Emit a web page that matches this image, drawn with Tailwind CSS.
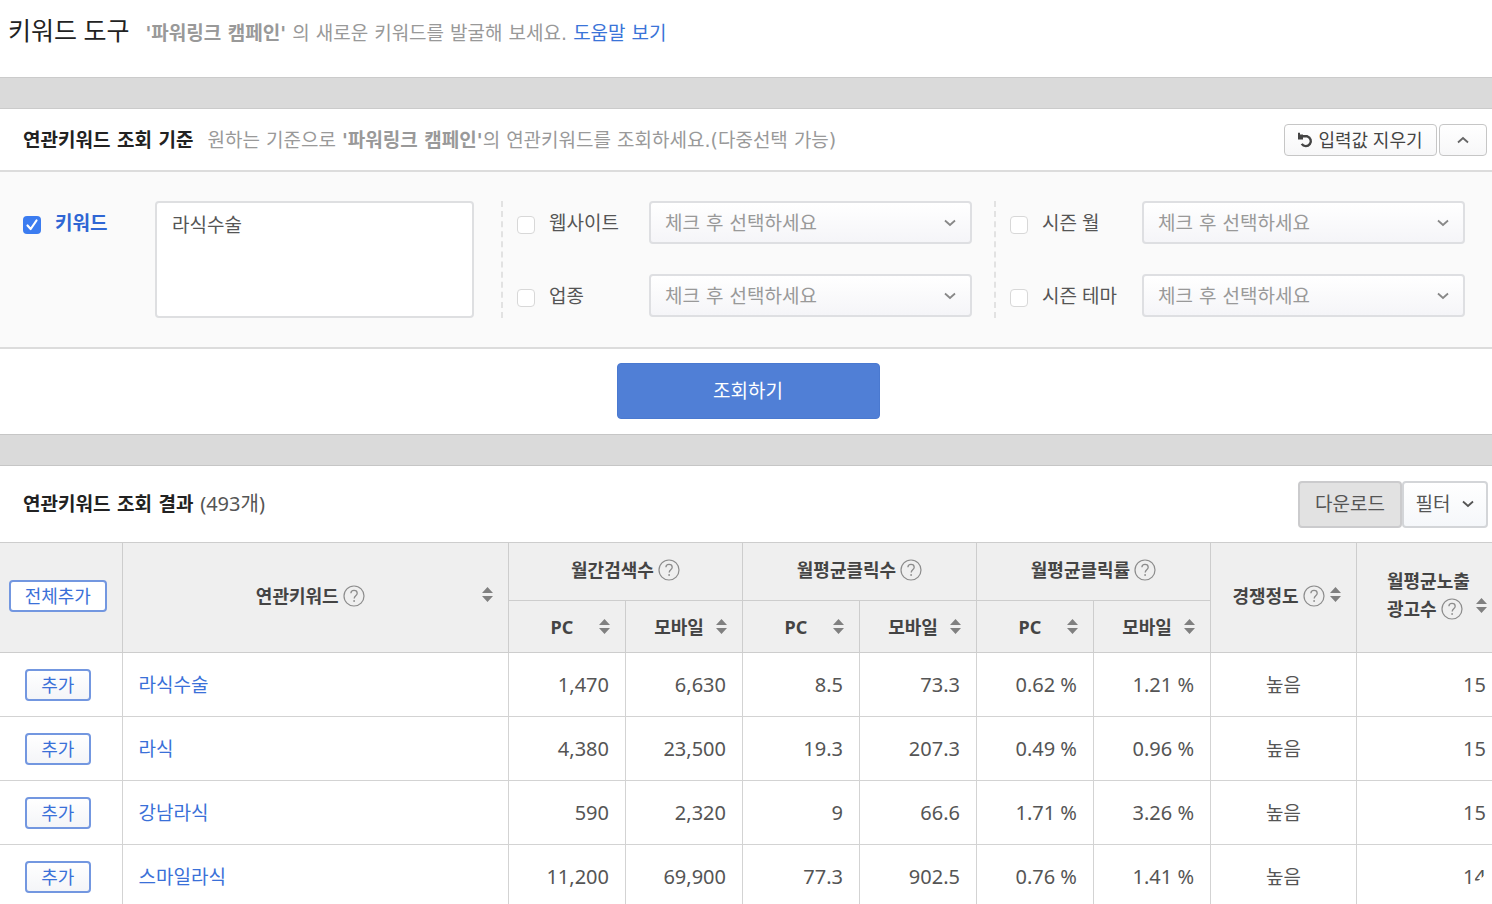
<!DOCTYPE html>
<html lang="ko">
<head>
<meta charset="utf-8">
<title>키워드 도구</title>
<script src="https://cdn.jsdelivr.net/npm/@tailwindcss/browser@4"></script>
</head>
<body class="overflow-hidden bg-white font-['Noto_Sans','Noto_Sans_CJK_KR',sans-serif] text-[19px] leading-7 text-[#555]">
<svg class="hidden" aria-hidden="true">
  <symbol id="help" viewBox="0 0 22 22"><circle cx="11" cy="11" r="10" fill="none" stroke="#8c8c8c" stroke-width="1.2"/><path d="M7.9 8.3C7.9 6.5 9.2 5.4 11 5.4s3.2 1 3.2 2.8c0 2.4-3 2.6-3 5.2" fill="none" stroke="#8c8c8c" stroke-width="1.3"/><circle cx="11.1" cy="16" r="0.9" fill="#8c8c8c"/></symbol>
  <symbol id="sort" viewBox="0 0 11 15"><path d="M5.5 0 11 6H0zM0 9h11l-5.5 6z" fill="#808080"/></symbol>
  <symbol id="down" viewBox="0 0 12 8"><path d="M1 1.5 6 6l5-4.5" fill="none" stroke="currentColor" stroke-width="1.8"/></symbol>
</svg>

<header class="flex h-[77px] items-start gap-4 pt-4 pl-2">
  <h1 class="text-[25px] leading-7 text-[#222]">키워드 도구</h1>
  <p class="pt-[3px] font-['DejaVu_Sans','Noto_Sans_CJK_KR',sans-serif] text-[#999]"><strong class="font-bold">'파워링크 캠페인'</strong> 의 새로운 키워드를 발굴해 보세요. <a href="#" class="text-[#3a74d8]">도움말 보기</a></p>
</header>
<div class="h-8 border-y border-[#cbcbcb] bg-[#dadada]"></div>

<section>
  <div class="flex h-[61px] items-center justify-between pr-[5px] pl-[23px]">
    <div class="flex gap-[14px] font-['DejaVu_Sans','Noto_Sans_CJK_KR',sans-serif]">
      <h2 class="font-bold text-[#222]">연관키워드 조회 기준</h2>
      <p class="text-[#999]">원하는 기준으로 <strong class="font-bold">'파워링크 캠페인'</strong>의 연관키워드를 조회하세요.(다중선택 가능)</p>
    </div>
    <div class="flex items-center gap-[2px]">
      <button class="flex h-8 w-[153px] items-center justify-center gap-1 rounded border border-[#c6c6c6] bg-linear-to-b from-white to-[#f7f7f8] text-[18px] text-[#444]">
        <svg class="h-4 w-4" viewBox="0 0 16 16" fill="none"><path d="M3 4.300h6.300a5 5 0 1 1-5.600 7.600" stroke="#444" stroke-width="2.400"/><path d="M0 .8h2v1.800L5 2.600v4.900H0z" fill="#444"/></svg>
        입력값 지우기
      </button>
      <button aria-label="접기" class="flex h-8 w-12 items-center justify-center rounded border border-[#c6c6c6] bg-linear-to-b from-white to-[#f7f7f8] text-[#666]"><svg class="h-2 w-3 rotate-180"><use href="#down"/></svg></button>
    </div>
  </div>

  <form>
    <div class="grid grid-cols-[501fr_493fr_498fr] border-y-2 border-[#dcdcdc] bg-[#fafafa] py-[29px]">
      <div class="flex items-start pr-[27px] pl-[23px]">
        <div class="flex w-[132px] shrink-0 items-center gap-[14px] pt-2">
          <span class="relative mt-1 flex h-[18px] w-[18px]">
            <input id="kw" type="checkbox" checked class="h-[18px] w-[18px] appearance-none rounded bg-[#3b7cf0]">
            <svg class="pointer-events-none absolute inset-0 h-[18px] w-[18px]" viewBox="0 0 18 18"><path d="M4.500 9.500 7.700 13l5.800-8.500" fill="none" stroke="#fff" stroke-width="2.200" stroke-linecap="round" stroke-linejoin="round"/></svg>
          </span>
          <label for="kw" class="font-bold text-[#2f66d4]">키워드</label>
        </div>
        <textarea aria-label="키워드" class="h-[117px] min-w-0 flex-1 resize-none rounded border-2 border-[#dedfe1] bg-white px-[15px] py-2 text-[#555]">라식수술</textarea>
      </div>

      <div class="flex flex-col gap-[30px] border-l-2 border-dashed border-[#e2e2e2] pr-[22px] pl-[14px]">
        <div class="flex items-center">
          <input id="site" type="checkbox" class="mt-1 h-[18px] w-[18px] appearance-none rounded border border-[#d8d8d8] bg-white">
          <label for="site" class="ml-[14px] w-[100px] shrink-0">웹사이트</label>
          <span class="relative flex min-w-0 flex-1 text-[#888]">
            <select aria-label="웹사이트" class="h-[43px] w-full appearance-none rounded border-2 border-[#dedfe2] bg-linear-to-b from-white to-[#f5f5f8] pl-[14px] font-['DejaVu_Sans','Noto_Sans_CJK_KR',sans-serif] text-[#999]"><option>체크 후 선택하세요</option></select>
            <svg class="pointer-events-none absolute top-[18px] right-4 h-2 w-3"><use href="#down"/></svg>
          </span>
        </div>
        <div class="flex items-center">
          <input id="biz" type="checkbox" class="mt-1 h-[18px] w-[18px] appearance-none rounded border border-[#d8d8d8] bg-white">
          <label for="biz" class="ml-[14px] w-[100px] shrink-0">업종</label>
          <span class="relative flex min-w-0 flex-1 text-[#888]">
            <select aria-label="업종" class="h-[43px] w-full appearance-none rounded border-2 border-[#dedfe2] bg-linear-to-b from-white to-[#f5f5f8] pl-[14px] font-['DejaVu_Sans','Noto_Sans_CJK_KR',sans-serif] text-[#999]"><option>체크 후 선택하세요</option></select>
            <svg class="pointer-events-none absolute top-[18px] right-4 h-2 w-3"><use href="#down"/></svg>
          </span>
        </div>
      </div>

      <div class="flex flex-col gap-[30px] border-l-2 border-dashed border-[#e2e2e2] pr-[27px] pl-[14px]">
        <div class="flex items-center">
          <input id="month" type="checkbox" class="mt-1 h-[18px] w-[18px] appearance-none rounded border border-[#d8d8d8] bg-white">
          <label for="month" class="ml-[14px] w-[100px] shrink-0">시즌 월</label>
          <span class="relative flex min-w-0 flex-1 text-[#888]">
            <select aria-label="시즌 월" class="h-[43px] w-full appearance-none rounded border-2 border-[#dedfe2] bg-linear-to-b from-white to-[#f5f5f8] pl-[14px] font-['DejaVu_Sans','Noto_Sans_CJK_KR',sans-serif] text-[#999]"><option>체크 후 선택하세요</option></select>
            <svg class="pointer-events-none absolute top-[18px] right-4 h-2 w-3"><use href="#down"/></svg>
          </span>
        </div>
        <div class="flex items-center">
          <input id="theme" type="checkbox" class="mt-1 h-[18px] w-[18px] appearance-none rounded border border-[#d8d8d8] bg-white">
          <label for="theme" class="ml-[14px] w-[100px] shrink-0">시즌 테마</label>
          <span class="relative flex min-w-0 flex-1 text-[#888]">
            <select aria-label="시즌 테마" class="h-[43px] w-full appearance-none rounded border-2 border-[#dedfe2] bg-linear-to-b from-white to-[#f5f5f8] pl-[14px] font-['DejaVu_Sans','Noto_Sans_CJK_KR',sans-serif] text-[#999]"><option>체크 후 선택하세요</option></select>
            <svg class="pointer-events-none absolute top-[18px] right-4 h-2 w-3"><use href="#down"/></svg>
          </span>
        </div>
      </div>
    </div>
    <div class="flex justify-center pt-[14px] pb-[15px] pl-1">
      <button type="button" class="h-14 w-[263px] rounded border border-[#4a79d0] bg-[#507fd6] text-white">조회하기</button>
    </div>
  </form>
</section>
<div class="h-8 border-y border-[#c6c6c6] bg-[#dadada]"></div>

<section class="overflow-hidden">
  <div class="flex h-[76px] items-center justify-between pr-1 pl-[23px]">
    <h2 class="font-['DejaVu_Sans','Noto_Sans_CJK_KR',sans-serif] font-bold text-[#222]">연관키워드 조회 결과 <span class="font-['Noto_Sans','Noto_Sans_CJK_KR',sans-serif] text-[20px] font-normal text-[#555]">(493개)</span></h2>
    <div class="flex">
      <button class="h-[47px] w-[104px] rounded border-2 border-[#cbcbcd] bg-[#e2e2e2]">다운로드</button>
      <button class="flex h-[47px] w-[86px] items-center justify-center gap-3 rounded border-2 border-[#d3d5d8] bg-linear-to-b from-white to-[#f5f7fa]">필터 <svg class="h-2 w-3"><use href="#down"/></svg></button>
    </div>
  </div>

  <table class="w-[calc(100%+11px)] table-fixed border-collapse">
    <colgroup>
      <col class="w-[122px]"><col>
      <col class="w-[117px]"><col class="w-[117px]"><col class="w-[117px]"><col class="w-[117px]"><col class="w-[117px]"><col class="w-[117px]">
      <col class="w-[146px]"><col class="w-[146px]">
    </colgroup>
    <thead class="bg-[#efefef] text-[18px] text-[#444] [&_th]:border [&_th]:border-[#cdcdcd] [&_th]:px-0 [&_th]:pt-0">
      <tr class="h-[58px] [&_th]:pb-[3px]">
        <th rowspan="2" class="border-l-0!"><button class="mr-[6px] h-8 w-[98px] rounded border-2 border-[#7397e0] bg-white leading-6 font-normal text-[#3a70d8]">전체추가</button></th>
        <th rowspan="2"><div class="flex items-center pr-[15px] pl-4"><span class="flex flex-1 items-center justify-center gap-1">연관키워드<svg class="h-[22px] w-[22px]"><use href="#help"/></svg></span><svg class="mb-1 h-[15px] w-[11px]"><use href="#sort"/></svg></div></th>
        <th colspan="2"><span class="flex items-center justify-center gap-1">월간검색수<svg class="h-[22px] w-[22px]"><use href="#help"/></svg></span></th>
        <th colspan="2"><span class="flex items-center justify-center gap-1">월평균클릭수<svg class="h-[22px] w-[22px]"><use href="#help"/></svg></span></th>
        <th colspan="2"><span class="flex items-center justify-center gap-1">월평균클릭률<svg class="h-[22px] w-[22px]"><use href="#help"/></svg></span></th>
        <th rowspan="2"><div class="flex items-center pr-[15px] pl-4"><span class="flex flex-1 items-center justify-center gap-1">경쟁정도<svg class="h-[22px] w-[22px]"><use href="#help"/></svg></span><svg class="mb-1 h-[15px] w-[11px]"><use href="#sort"/></svg></div></th>
        <th rowspan="2" class="pb-[6px]!"><div class="flex items-end pr-[15px] pl-[30px]"><span class="flex-1 text-left leading-7">월평균노출<span class="flex items-center gap-1">광고수<svg class="h-[22px] w-[22px]"><use href="#help"/></svg></span></span><svg class="mb-[10px] h-[15px] w-[11px]"><use href="#sort"/></svg></div></th>
      </tr>
      <tr class="h-[52px] [&_th]:pb-0">
        <th><div class="flex items-center pr-[15px] pl-4"><span class="flex-1">PC</span><svg class="h-[15px] w-[11px]"><use href="#sort"/></svg></div></th>
        <th><div class="flex items-center pr-[15px] pl-4"><span class="flex-1">모바일</span><svg class="h-[15px] w-[11px]"><use href="#sort"/></svg></div></th>
        <th><div class="flex items-center pr-[15px] pl-4"><span class="flex-1">PC</span><svg class="h-[15px] w-[11px]"><use href="#sort"/></svg></div></th>
        <th><div class="flex items-center pr-[15px] pl-4"><span class="flex-1">모바일</span><svg class="h-[15px] w-[11px]"><use href="#sort"/></svg></div></th>
        <th><div class="flex items-center pr-[15px] pl-4"><span class="flex-1">PC</span><svg class="h-[15px] w-[11px]"><use href="#sort"/></svg></div></th>
        <th><div class="flex items-center pr-[15px] pl-4"><span class="flex-1">모바일</span><svg class="h-[15px] w-[11px]"><use href="#sort"/></svg></div></th>
      </tr>
    </thead>
    <tbody class="text-right text-[20px] text-[#555] [&_a]:text-[#3a70d8] [&_button]:mr-[6px] [&_button]:h-8 [&_button]:w-[66px] [&_button]:rounded [&_button]:border-2 [&_button]:border-[#7397e0] [&_button]:bg-linear-to-b [&_button]:from-white [&_button]:to-[#f4f5f8] [&_button]:text-[18px] [&_button]:leading-6 [&_button]:text-[#3a70d8] [&_td]:border [&_td]:border-[#d3d3d3] [&_td]:px-4 [&_td]:py-0 [&_td:first-child]:border-l-0 [&_td:first-child]:px-0 [&_td:first-child]:text-center [&_td:nth-child(2)]:text-left [&_td:nth-child(2)]:text-[19px] [&_td:nth-child(9)]:text-center [&_td:nth-child(9)]:text-[19px] [&_tr]:h-16">
      <tr><td><button>추가</button></td><td><a href="#">라식수술</a></td><td>1,470</td><td>6,630</td><td>8.5</td><td>73.3</td><td>0.62 %</td><td>1.21 %</td><td>높음</td><td>15</td></tr>
      <tr><td><button>추가</button></td><td><a href="#">라식</a></td><td>4,380</td><td>23,500</td><td>19.3</td><td>207.3</td><td>0.49 %</td><td>0.96 %</td><td>높음</td><td>15</td></tr>
      <tr><td><button>추가</button></td><td><a href="#">강남라식</a></td><td>590</td><td>2,320</td><td>9</td><td>66.6</td><td>1.71 %</td><td>3.26 %</td><td>높음</td><td>15</td></tr>
      <tr><td><button>추가</button></td><td><a href="#">스마일라식</a></td><td>11,200</td><td>69,900</td><td>77.3</td><td>902.5</td><td>0.76 %</td><td>1.41 %</td><td>높음</td><td>1<span class="inline-block [clip-path:polygon(0_0,100%_0,90%_45%,30%_66%,0_66%)]">4</span></td></tr>
    </tbody>
  </table>
</section>
</body>
</html>
